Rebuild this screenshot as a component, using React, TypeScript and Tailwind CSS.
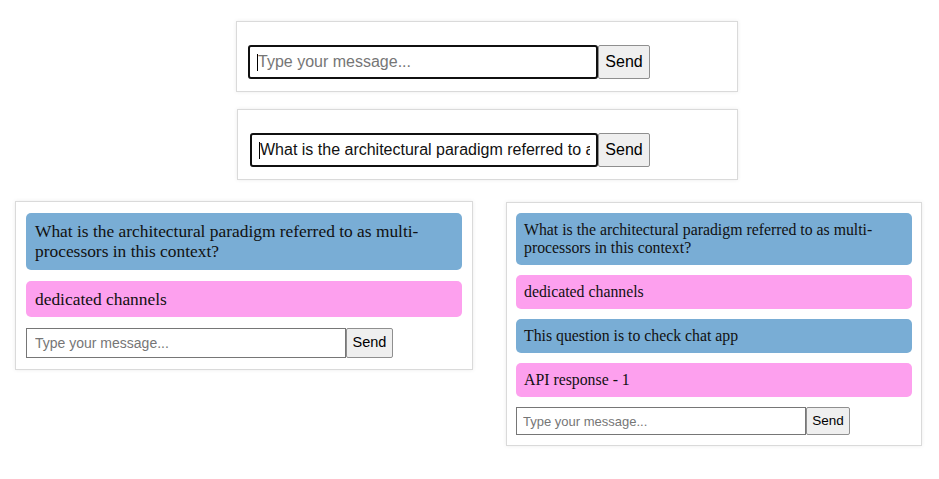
import React from 'react';

type Msg = { text: string; from: 'user' | 'bot' };

const sans = { fontFamily: '"Liberation Sans", Arial, sans-serif' };
const serif = { fontFamily: '"Liberation Serif", "Times New Roman", serif' };

function FocusedBar({ value, inputW, ml }: { value?: string; inputW: string; ml: string }) {
  return (
    <div className={`flex ${ml} mt-[23px]`} style={sans}>
      <div className={`relative ${inputW} h-[34px]`}>
        <input
          readOnly
          value={value ?? ''}
          placeholder="Type your message..."
          className="w-full h-full border-2 border-[#101010] rounded-[3px] pl-[8px] pr-[6px] text-[16px] text-[#111] placeholder:text-[#767676] outline-none bg-white"
        />
        <span className="absolute left-[9px] top-[9px] w-[1px] h-[17px] bg-black" />
      </div>
      <button className="w-[52px] h-[34px] bg-[#efefef] border border-[#8f8f8f] rounded-[2px] text-[16px] text-black">
        Send
      </button>
    </div>
  );
}

function Bubble({ m, size }: { m: Msg; size: 'lg' | 'sm' }) {
  const bg = m.from === 'user' ? 'bg-[#79add5]' : 'bg-[#fda0ee]';
  const cls =
    size === 'lg'
      ? 'rounded-[5px] px-[9px] pt-[8px] pb-[8.5px] text-[17.4px] leading-[20px]'
      : 'rounded-[5px] px-[8px] py-[8px] text-[15.8px] leading-[18px]';
  return (
    <div className={`${bg} ${cls} text-[#111]`} style={serif}>
      {m.text}
    </div>
  );
}

const first: Msg[] = [
  { text: 'What is the architectural paradigm referred to as multi-processors in this context?', from: 'user' },
  { text: 'dedicated channels', from: 'bot' },
];

const second: Msg[] = [
  ...first,
  { text: 'This question is to check chat app', from: 'user' },
  { text: 'API response - 1', from: 'bot' },
];

export default function App() {
  return (
    <div className="w-[939px] h-[479px] bg-white pt-[21px] overflow-hidden">
      <div className="ml-[236px] w-[502px] h-[71px] border border-[#dadada] shadow-[0_0_4px_rgba(0,0,0,0.08)] bg-white">
        <FocusedBar inputW="w-[350px]" ml="ml-[11px]" />
      </div>
      <div className="ml-[237px] mt-[17px] w-[501px] h-[71px] border border-[#dadada] shadow-[0_0_4px_rgba(0,0,0,0.08)] bg-white">
        <FocusedBar
          inputW="w-[348px]"
          ml="ml-[12px]"
          value="What is the architectural paradigm referred to as multi-processors in this context?"
        />
      </div>

      <div className="flex items-start mt-[21px]">
        <div className="ml-[15px] w-[458px] border border-[#dadada] shadow-[0_0_4px_rgba(0,0,0,0.08)] bg-white px-[10px] pt-[11px] pb-[11px] flex flex-col gap-[11px]">
          {first.map((m, i) => (
            <Bubble key={i} m={m} size="lg" />
          ))}
          <div className="flex" style={sans}>
            <input
              readOnly
              placeholder="Type your message..."
              className="w-[320px] h-[30px] border border-[#767676] px-[8px] text-[14px] placeholder:text-[#767676] outline-none"
            />
            <button className="w-[47px] h-[30px] bg-[#efefef] border border-[#8f8f8f] rounded-[2px] text-[14.5px] text-black">
              Send
            </button>
          </div>
        </div>

        <div className="ml-[33px] mt-[1px] w-[416px] border border-[#dadada] shadow-[0_0_4px_rgba(0,0,0,0.08)] bg-white px-[9px] pt-[10px] pb-[10px] flex flex-col gap-[10px]">
          {second.map((m, i) => (
            <Bubble key={i} m={m} size="sm" />
          ))}
          <div className="flex" style={sans}>
            <input
              readOnly
              placeholder="Type your message..."
              className="w-[290px] h-[28px] border border-[#767676] px-[6px] text-[13px] placeholder:text-[#767676] outline-none"
            />
            <button className="w-[44px] h-[28px] bg-[#efefef] border border-[#8f8f8f] rounded-[2px] text-[13.5px] text-black">
              Send
            </button>
          </div>
        </div>
      </div>
    </div>
  );
}
